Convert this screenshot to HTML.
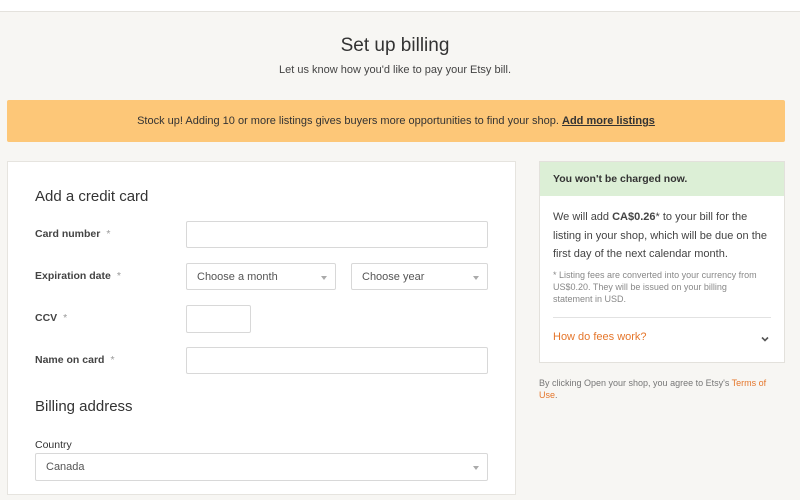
<!DOCTYPE html>
<html><head><style>
*{box-sizing:border-box;margin:0;padding:0}
body{width:800px;height:500px;overflow:hidden;background:#f7f6f3;font-family:"Liberation Sans",sans-serif;color:#333;position:relative}
.top{position:absolute;left:0;top:0;width:800px;height:12px;background:#fff;border-bottom:1px solid #e4e2dd}
.abs{position:absolute}
h1{position:absolute;top:35px;width:790px;text-align:center;font-size:19px;font-weight:normal;color:#333}
.sub{top:64px;width:790px;text-align:center;font-size:11px;color:#444}
.banner{left:7px;top:100px;width:778px;height:42px;background:#fdc778;border-radius:2px;font-size:11px;text-align:center;line-height:42px;color:#333}
.banner b{text-decoration:underline}
.card{left:7px;top:161px;width:509px;height:334px;background:#fff;border:1px solid #e6e4df}
.lbl{font-size:10.5px;font-weight:bold;color:#444;left:35px}
.lbl i{font-style:normal;color:#999;font-weight:normal;margin-left:6px}
.in{border:1px solid #d8d8d8;border-radius:2px;background:#fff;font-size:11px;color:#555;padding-left:10px;display:flex;align-items:center}
.arr{position:absolute;right:8px;top:12px;width:0;height:0;border-left:3px solid transparent;border-right:3px solid transparent;border-top:4px solid #aaa}
h2{position:absolute;left:35px;font-size:15px;font-weight:normal;color:#333}
.side{left:539px;top:161px;width:246px;height:202px;background:#fff;border:1px solid #e3e1dc}
.gh{height:34px;background:#dcefd6;font-size:10.5px;font-weight:bold;color:#333;padding:11px 13px}
</style></head><body>
<div class="top"></div>
<h1>Set up billing</h1>
<div class="abs sub">Let us know how you'd like to pay your Etsy bill.</div>
<div class="abs banner">Stock up! Adding 10 or more listings gives buyers more opportunities to find your shop. <b>Add more listings</b></div>
<div class="abs card"></div>
<h2 style="top:188px">Add a credit card</h2>
<div class="abs lbl" style="top:228px">Card number<i>*</i></div>
<div class="abs in" style="left:186px;top:221px;width:302px;height:27px"></div>
<div class="abs lbl" style="top:270px">Expiration date<i>*</i></div>
<div class="abs in" style="left:186px;top:263px;width:150px;height:27px">Choose a month<span class="arr"></span></div>
<div class="abs in" style="left:351px;top:263px;width:137px;height:27px">Choose year<span class="arr"></span></div>
<div class="abs lbl" style="top:312px">CCV<i>*</i></div>
<div class="abs in" style="left:186px;top:305px;width:65px;height:28px"></div>
<div class="abs lbl" style="top:354px">Name on card<i>*</i></div>
<div class="abs in" style="left:186px;top:347px;width:302px;height:27px"></div>
<h2 style="top:398px">Billing address</h2>
<div class="abs lbl" style="top:439px;font-weight:normal;color:#333">Country</div>
<div class="abs in" style="left:35px;top:453px;width:453px;height:28px">Canada<span class="arr"></span></div>
<div class="abs side">
<div class="gh">You won't be charged now.</div>
<div style="padding:12px 13px 0;font-size:11px;line-height:18.5px;color:#444">We will add <b>CA$0.26</b>* to your bill for the listing in your shop, which will be due on the first day of the next calendar month.</div>
<div style="padding:5px 20px 0 13px;font-size:9px;line-height:12px;color:#888">* Listing fees are converted into your currency from US$0.20. They will be issued on your billing statement in USD.</div>
<div style="margin:12px 13px 0;border-top:1px solid #e2e2e2;padding-top:13px;font-size:11px;color:#e5762b;position:relative">How do fees work?<svg style="position:absolute;right:2px;top:18px" width="8" height="6" viewBox="0 0 8 6"><path d="M1 1.5L4 4.5L7 1.5" stroke="#555" stroke-width="1.6" fill="none"/></svg></div>
</div>
<div class="abs" style="left:539px;top:377px;width:245px;font-size:9px;line-height:12px;color:#777">By clicking Open your shop, you agree to Etsy's <span style="color:#e5762b">Terms of Use</span>.</div>
</body></html>
